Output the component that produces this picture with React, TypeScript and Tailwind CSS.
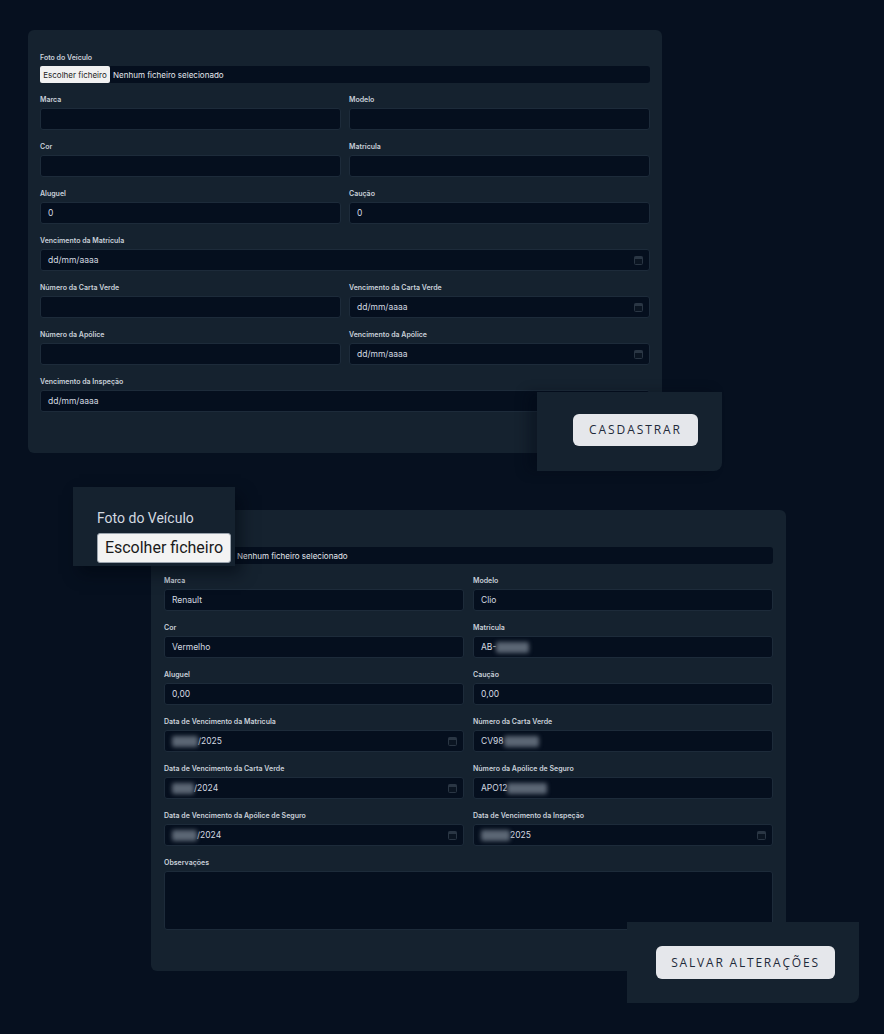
import React from "react";

const panelFont = { fontFamily: "Inter, 'Noto Sans', sans-serif" };

function Blur({ w }: { w: number }) {
  // redacted value
  return (
    <span
      className="inline-block h-[11px] rounded-[2px] bg-[#5b6674] blur-[2px] align-middle"
      style={{ width: w }}
    />
  );
}

function CalendarIcon() {
  return (
    <svg width="9" height="9" viewBox="0 0 9 9" className="ml-auto mr-[6px] shrink-0">
      <rect x="0.5" y="0.5" width="8" height="8" rx="1" fill="#0b1522" stroke="#2a3644" />
      <rect x="0.5" y="0.5" width="8" height="2.5" fill="#2a3644" />
    </svg>
  );
}

function Field({
  label,
  value,
  date,
  full,
  tall,
}: {
  label: string;
  value?: React.ReactNode;
  date?: boolean;
  full?: boolean;
  tall?: boolean;
}) {
  return (
    <div className={`flex flex-col ${full ? "col-span-2" : ""}`}>
      <span className="text-[7px] leading-[12px] font-semibold text-[#c9d1da] mb-[2px]">{label}</span>
      <div
        className={`flex items-center ${tall ? "h-[59px]" : "h-[22px]"} rounded-[3px] border border-[#1d2b3a] bg-[#050f1e] pl-[7px] text-[8.5px] text-[#d4dae1]`}
      >
        {value}
        {date && <CalendarIcon />}
      </div>
    </div>
  );
}

function FileRow({ label, covered }: { label: string; covered?: boolean }) {
  return (
    <div className="col-span-2 flex flex-col">
      {covered ? (
        <span className="h-[12px] mb-[2px]" />
      ) : (
        <span className="text-[7px] leading-[12px] font-semibold text-[#c9d1da] mb-[2px]">{label}</span>
      )}
      <div className="flex h-[17px] items-center rounded-[3px] bg-[#050f1e] text-[8px] text-[#e5e9ee]">
        {covered ? (
          <span className="ml-[73px]">Nenhum ficheiro selecionado</span>
        ) : (
          <>
            <span className="flex h-[17px] w-[70px] items-center justify-center rounded-[2px] bg-[#f1f1f1] text-[#222]">
              Escolher ficheiro
            </span>
            <span className="ml-[3px]">Nenhum ficheiro selecionado</span>
          </>
        )}
      </div>
    </div>
  );
}

function dateVal(w: number, year: string) {
  return (
    <span className="flex items-center">
      <Blur w={w} />
      <span>{year}</span>
    </span>
  );
}

export default function App() {
  return (
    <div
      className="relative min-h-[1034px] w-[884px] overflow-hidden bg-[#06101f]"
      style={panelFont}
    >
      {/* first form */}
      <div className="ml-[28px] pt-[30px]">
        <div className="h-[423px] w-[634px] rounded-[6px] bg-[#15222f] px-[12px] pt-[22px]">
          <div className="grid grid-cols-2 gap-x-[8px] gap-y-[11px]">
            <FileRow label="Foto do Veículo" />
            <Field label="Marca" />
            <Field label="Modelo" />
            <Field label="Cor" />
            <Field label="Matrícula" />
            <Field label="Aluguel" value="0" />
            <Field label="Caução" value="0" />
            <Field label="Vencimento da Matrícula" value="dd/mm/aaaa" date full />
            <Field label="Número da Carta Verde" />
            <Field label="Vencimento da Carta Verde" value="dd/mm/aaaa" date />
            <Field label="Número da Apólice" />
            <Field label="Vencimento da Apólice" value="dd/mm/aaaa" date />
            <Field label="Vencimento da Inspeção" value="dd/mm/aaaa" date full />
          </div>
        </div>
      </div>

      {/* second form */}
      <div className="ml-[151px] mt-[57px] pb-[63px]">
        <div className="h-[461px] w-[635px] rounded-[6px] bg-[#15222f] px-[13px] pt-[23px]">
          <div className="grid grid-cols-2 gap-x-[9px] gap-y-[11px]">
            <FileRow label="Foto do Veículo" covered />
            <Field label="Marca" value="Renault" />
            <Field label="Modelo" value="Clio" />
            <Field label="Cor" value="Vermelho" />
            <Field
              label="Matrícula"
              value={
                <span className="flex items-center">
                  AB-
                  <Blur w={33} />
                </span>
              }
            />
            <Field label="Aluguel" value="0,00" />
            <Field label="Caução" value="0,00" />
            <Field label="Data de Vencimento da Matrícula" value={dateVal(26, "/2025")} date />
            <Field
              label="Número da Carta Verde"
              value={
                <span className="flex items-center">
                  CV98
                  <Blur w={35} />
                </span>
              }
            />
            <Field label="Data de Vencimento da Carta Verde" value={dateVal(22, "/2024")} date />
            <Field
              label="Número da Apólice de Seguro"
              value={
                <span className="flex items-center">
                  APO12
                  <Blur w={40} />
                </span>
              }
            />
            <Field label="Data de Vencimento da Apólice de Seguro" value={dateVal(25, "/2024")} date />
            <Field label="Data de Vencimento da Inspeção" value={dateVal(29, "2025")} date />
            <Field label="Observações" full tall />
          </div>
        </div>
      </div>

      {/* zoomed crop: register button */}
      <div className="absolute left-[537px] top-[392px] h-[79px] w-[185px] rounded-br-[8px] bg-[#15222f] pl-[36px] pt-[22px] shadow-[-10px_0_12px_rgba(4,10,20,0.35)]">
        <button
          className="h-[32px] w-[125px] rounded-[6px] bg-[#e5e7eb] text-[12px] font-medium tracking-[0.16em] text-[#1f2a3a]"
          style={{ fontFamily: "'Open Sans', sans-serif" }}
        >
          CASDASTRAR
        </button>
      </div>

      {/* zoomed crop: file chooser */}
      <div className="absolute left-[73px] top-[487px] h-[79px] w-[162px] bg-[#15222f] shadow-[6px_8px_14px_rgba(2,8,16,0.55)]">
        <div
          className="ml-[24px] mt-[22px] text-[14px] leading-[18px] text-[#d3d9e0]"
          style={{ fontFamily: "Roboto, sans-serif" }}
        >
          Foto do Veículo
        </div>
        <div
          className="ml-[24px] mt-[6px] flex h-[30px] w-[134px] items-center justify-center rounded-[3px] border border-[#9aa3ad] bg-[#f3f3f3] text-[16px] text-[#1a1a1a]"
          style={{ fontFamily: "Roboto, sans-serif" }}
        >
          Escolher ficheiro
        </div>
      </div>

      {/* zoomed crop: save button */}
      <div className="absolute left-[627px] top-[922px] h-[81px] w-[232px] rounded-br-[8px] bg-[#15222f] pl-[29px] pt-[24px]">
        <button
          className="h-[33px] w-[179px] rounded-[6px] bg-[#e5e7eb] text-[12px] font-medium tracking-[0.15em] text-[#1f2a3a]"
          style={{ fontFamily: "'Open Sans', sans-serif" }}
        >
          SALVAR ALTERAÇÕES
        </button>
      </div>
    </div>
  );
}
